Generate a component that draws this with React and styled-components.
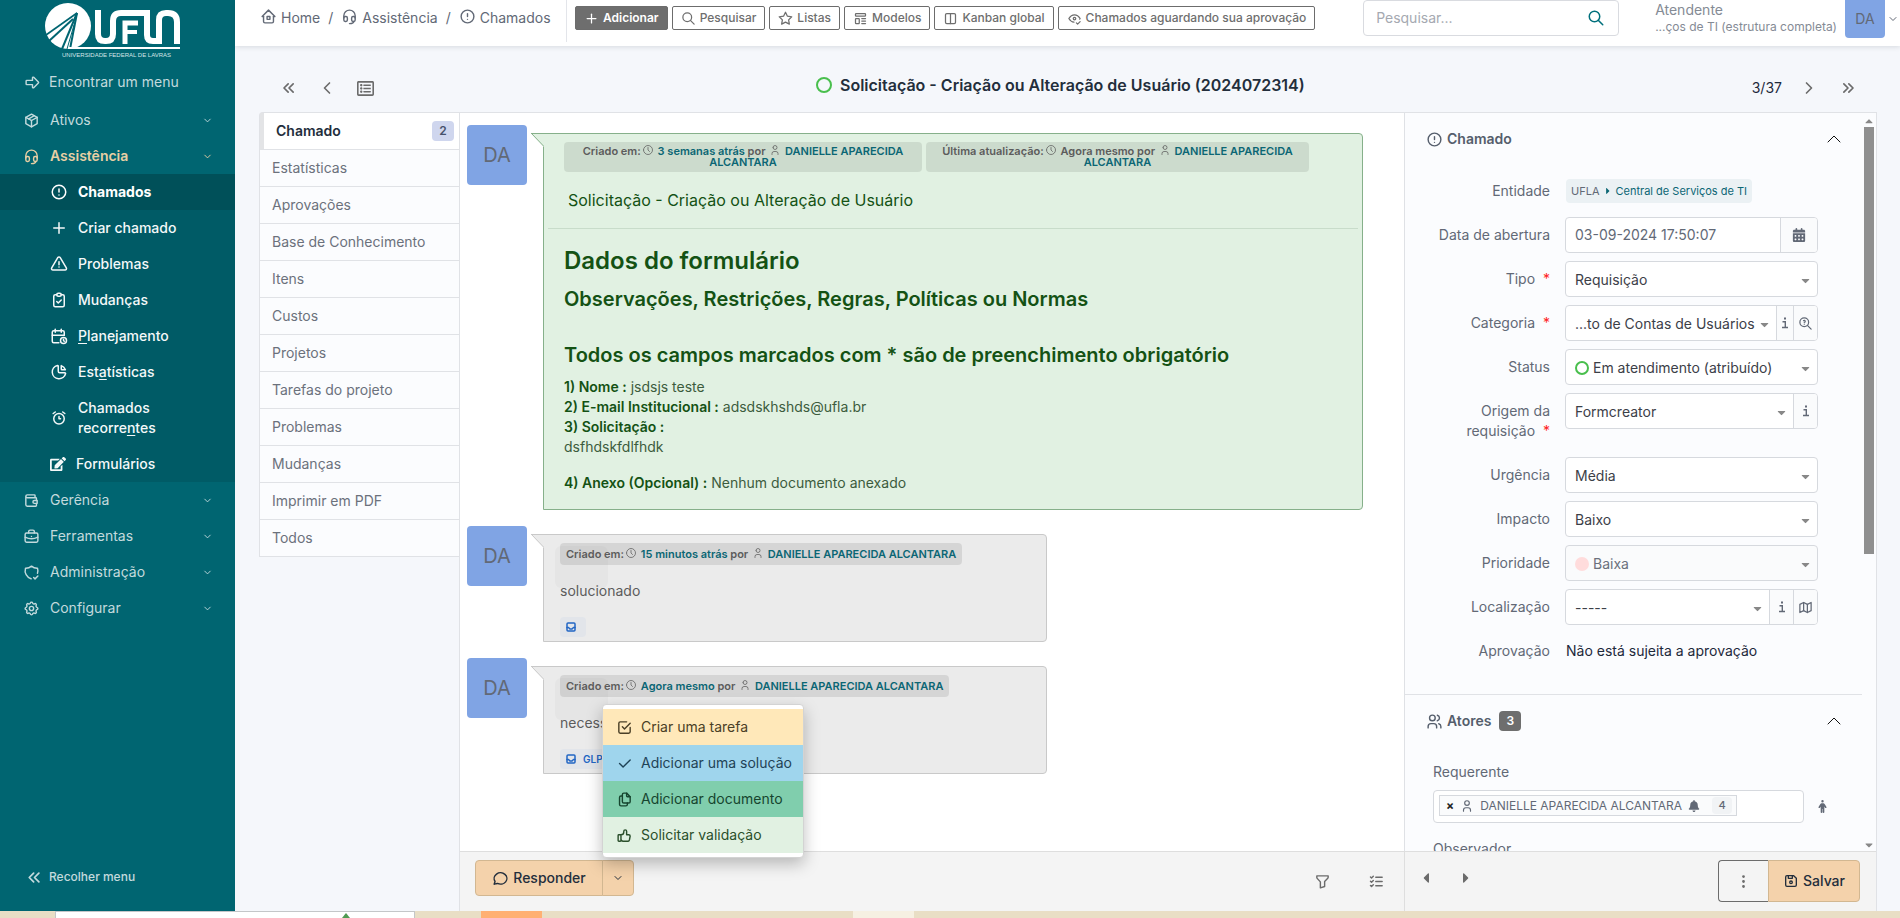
import React from "react";
import styled, { createGlobalStyle, css } from "styled-components";
import {
  TbHome2, TbHeadset, TbAlertCircle, TbPlus, TbSearch, TbStar, TbTemplate, TbLayoutColumns, TbEyeCheck,
  TbPackage, TbAlertTriangle, TbClipboardCheck, TbCalendarTime, TbChartPie, TbAlarm, TbWallet, TbBriefcase,
  TbShieldCheck, TbSettings, TbArrowBigRight, TbChevronDown, TbChevronUp, TbChevronLeft, TbChevronRight,
  TbChevronsLeft, TbChevronsRight, TbFilter, TbListCheck, TbDotsVertical, TbDeviceFloppy, TbClock, TbUser,
  TbUsers, TbMap, TbZoomQuestion, TbCheckbox, TbCheck, TbFiles, TbThumbUp, TbMessageCircle, TbInbox,
} from "react-icons/tb";
import { FaRegListAlt, FaEdit, FaBell, FaCaretRight, FaCaretLeft, FaCaretDown, FaCaretUp } from "react-icons/fa";
import { FaCalendarDays, FaPerson } from "react-icons/fa6";

const Global = createGlobalStyle`
  * { box-sizing: border-box; }
  body { margin: 0; font: 400 14px/20px Inter, "Liberation Sans", sans-serif; color: #1e293b; background: #f5f7fb; }
  button, input, select { font: inherit; color: inherit; margin: 0; }
  button { cursor: pointer; }
  a { color: inherit; text-decoration: none; }
  h1, h2, h3, p, ul { margin: 0; padding: 0; }
  ul { list-style: none; }
  svg { flex: none; }
`;

const Page = styled.div`
  height: 100vh;
  display: flex;
  flex-direction: column;
  overflow: hidden;
`;
const Shell = styled.div`
  flex: 1;
  min-height: 0;
  display: flex;
`;

/* ---------- sidebar ---------- */
const Sidebar = styled.nav`
  width: 235px;
  flex: none;
  background: #006571;
  color: #c3dadd;
  display: flex;
  flex-direction: column;
`;
const LogoBox = styled.a`
  display: block;
  height: 62px;
  padding: 2px 0 0 45px;
  flex: none;
`;
const FindMenu = styled.button`
  display: flex;
  align-items: center;
  gap: 8px;
  height: 40px;
  padding: 0 0 0 24px;
  border: 0;
  background: none;
  flex: none;
`;
const MenuLink = styled.a`
  display: flex;
  align-items: center;
  height: 36px;
  padding: 0 22px 0 23px;
  gap: 10px;
  ${(p) => p.$current && css`color: #e8cfa4; font-weight: 600;`}
  span { flex: 1; }
`;
const SubMenu = styled.ul`
  background: #005b66;
  color: #f4f8f9;
`;
const SubLink = styled.a`
  display: flex;
  align-items: center;
  gap: 10px;
  padding: 8px 48px 8px 50px;
  font-weight: ${(p) => (p.$active ? 700 : 500)};
  background: ${(p) => (p.$active ? "#005059" : "transparent")};
  color: ${(p) => (p.$active ? "#ffffff" : "inherit")};
  u { text-underline-offset: 2px; }
`;
const Collapse = styled.button`
  display: flex;
  align-items: center;
  gap: 4px;
  margin-top: auto;
  height: 68px;
  padding: 0 0 0 24px;
  border: 0;
  background: none;
  font-size: 12px;
  font-weight: 500;
`;

/* ---------- top bar ---------- */
const Main = styled.div`
  flex: 1;
  min-width: 0;
  display: flex;
  flex-direction: column;
`;
const TopBar = styled.header`
  height: 46px;
  flex: none;
  display: flex;
  align-items: flex-start;
  background: #fff;
  box-shadow: 0 1px 5px rgba(30, 41, 59, 0.14);
  color: #626976;
`;
const Crumbs = styled.nav`
  display: flex;
  align-items: center;
  height: 36px;
  padding-left: 25px;
  gap: 8px;
  width: 331px;
  a { display: flex; align-items: center; gap: 4px; }
  svg { margin-bottom: 4px; }
`;
const Actions = styled.div`
  display: flex;
  align-items: center;
  gap: 4px;
  height: 42px;
  padding: 0 0 6px 8px;
  border-left: 1px solid #e3e5ea;
`;
const ActionButton = styled.button`
  display: flex;
  align-items: center;
  gap: 4px;
  height: 24px;
  padding: 0 8px;
  border: 1px solid #6c6c6c;
  border-radius: 2px;
  background: ${(p) => (p.$solid ? "#6e6e6e" : "#fff")};
  color: ${(p) => (p.$solid ? "#fff" : "#6e6e6e")};
  font-size: 12px;
  font-weight: ${(p) => (p.$solid ? 600 : 500)};
  white-space: nowrap;
`;
const SearchBox = styled.label`
  display: flex;
  align-items: center;
  width: 256px;
  height: 36px;
  margin: 0 36px 0 auto;
  padding: 0 13px 0 12px;
  border: 1px solid #d9dbe0;
  border-radius: 4px;
  color: #00707c;
  input { flex: 1; min-width: 0; border: 0; outline: 0; padding: 0; background: none; }
  input::placeholder { color: #a5a9b1; }
`;
const UserMenu = styled.button`
  display: flex;
  align-items: flex-start;
  gap: 8px;
  border: 0;
  padding: 0 1px 0 0;
  background: none;
  text-align: left;
  color: #858b95;
  svg { margin-top: 13px; margin-left: -6px; color: #626976; }
`;
const UserText = styled.span`
  display: flex;
  flex-direction: column;
  line-height: 20px;
  small { font-size: 12px; line-height: 14px; }
`;
const Avatar = styled.span`
  display: flex;
  align-items: center;
  justify-content: center;
  flex: none;
  width: ${(p) => (p.$small ? 40 : 60)}px;
  height: ${(p) => (p.$small ? 38 : 60)}px;
  border-radius: ${(p) => (p.$small ? "0 0 4px 4px" : "4px")};
  background: #80a4e4;
  color: #626976;
  font-size: ${(p) => (p.$small ? 14 : 20)}px;
`;

/* ---------- title row ---------- */
const TitleRow = styled.div`
  height: 66px;
  flex: none;
  display: flex;
  align-items: center;
  justify-content: space-between;
  padding: 18px 40px 0 42px;
`;
const Pager = styled.div`
  display: flex;
  align-items: center;
  gap: ${(p) => p.$gap}px;
`;
const IconButton = styled.button`
  display: inline-flex;
  align-items: center;
  justify-content: center;
  min-width: 24px;
  height: 24px;
  padding: 0;
  border: 0;
  background: none;
  color: #6b6b6b;
`;
const Title = styled.h1`
  display: flex;
  align-items: center;
  gap: 8px;
  padding: 0 8px 6px 0;
  font-size: 16px;
  line-height: 24px;
  font-weight: 600;
  color: #232e3c;
`;
const Ring = styled.i`
  width: ${(p) => p.$size}px;
  height: ${(p) => p.$size}px;
  border-radius: 50%;
  border: ${(p) => (p.$fill ? "0" : "2px solid #49bf4d")};
  background: ${(p) => p.$fill || "transparent"};
`;

/* ---------- body ---------- */
const Body = styled.div`
  flex: 1;
  min-height: 0;
  display: flex;
  padding: 0 23px 0 24px;
`;
const Tabs = styled.ul`
  width: 200px;
  flex: none;
  align-self: flex-start;
  border: 1px solid #e0e2e6;
  border-right: 0;
  border-radius: 4px 0 0 0;
`;
const Tab = styled.a`
  display: flex;
  align-items: center;
  justify-content: space-between;
  height: 37px;
  padding: 0 5px 0 12px;
  background: #fbfcfe;
  color: #6b717c;
  border-bottom: 1px solid #e0e2e6;
  li:last-child & { height: 36px; border-bottom: 0; }
  ${(p) => p.$active && css`
    background: #fff;
    color: #232e3c;
    font-weight: 600;
    border-left: 4px solid #e3e4e6;
  `}
`;
const TabBadge = styled.span`
  min-width: 22px;
  border-radius: 4px;
  text-align: center;
  font-size: 12px;
  font-weight: 600;
  line-height: 20px;
  background: #cfd6ee;
  color: #47526b;
`;
const Card = styled.section`
  flex: 1;
  min-width: 0;
  display: flex;
  flex-direction: column;
  background: #fff;
  border: 1px solid #e0e2e6;
  border-bottom: 0;
`;
const Columns = styled.div`
  flex: 1;
  min-height: 0;
  display: flex;
`;
const Timeline = styled.div`
  flex: 1;
  min-width: 0;
  padding: 12px 41px 0 7px;
  display: flex;
  flex-direction: column;
  gap: 16px;
`;
const Entry = styled.article`
  display: flex;
  align-items: flex-start;
  gap: 16px;
`;
const Bubble = styled.div`
  position: relative;
  flex: ${(p) => (p.$wide ? "1" : "0 1 504px")};
  min-width: 0;
  margin-top: 8px;
  border: 1px solid ${(p) => (p.$wide ? "#86b08a" : "#c9c9c9")};
  border-radius: 0 4px 4px 0;
  background: ${(p) => (p.$wide ? "#e1f1e2" : "#ebebeb")};
  color: ${(p) => (p.$wide ? "#145214" : "#5c5c5c")};
  padding: ${(p) => (p.$wide ? "8px 4px 16px" : "8px 16px 4px")};
`;
const Tail = styled.svg`
  position: absolute;
  left: -13px;
  top: -1px;
`;
const MetaRow = styled.div`
  display: grid;
  grid-template-columns: 358fr 383fr;
  gap: 4px;
  padding: 0 49px 0 16px;
`;
const Meta = styled.div`
  position: relative;
  width: fit-content;
  padding: ${(p) => (p.$center ? "4px 12px" : "6px 6px 5px")};
  border-radius: 4px;
  background: rgba(0, 0, 0, 0.09);
  color: #5c5c5c;
  font-size: 11px;
  line-height: 11px;
  font-weight: 600;
  ${(p) => p.$center && css`width: auto; text-align: center;`}
  a, b { color: #0b6674; font-weight: 600; }
  svg { width: 12px; height: 12px; margin: -4px 1px -1px; }
  svg path { stroke-width: 1.500; }
`;
const Ghost = styled.i`
  position: absolute;
  left: 11px;
  top: 11px;
  width: 53px;
  height: 42px;
  border-radius: 6px;
  background: rgba(0, 0, 0, 0.025);
`;
const RequestTitle = styled.h2`
  margin-top: 16px;
  padding: 0 20px 16px;
  border-bottom: 1px solid #c8dcca;
  font-size: 16px;
  line-height: 24px;
  font-weight: 400;
`;
const FormData = styled.div`
  padding: 16px 16px 0;
  h2 { font-size: 24px; line-height: 32px; font-weight: 600; }
  h3 { margin: 8px 0 28px; font-size: 20px; line-height: 28px; font-weight: 600; }
  h3 + h3 { margin-bottom: 8px; }
  p { color: #3c5c3d; line-height: 20px; }
  p + p.gap { margin-top: 16px; }
  b { color: #145214; font-weight: 600; }
`;
const NoteText = styled.p`
  margin: 16px 0;
  line-height: 20px;
`;
const SourceBadge = styled.span`
  display: inline-flex;
  align-items: center;
  gap: 6px;
  min-width: 26px;
  height: 20px;
  padding: 0 5px;
  border-radius: 4px;
  background: #e2e5ea;
  color: #2266c4;
  font-size: 10px;
  font-weight: 600;
  vertical-align: top;
  svg path { stroke-width: 3; }
`;

/* ---------- side panel ---------- */
const Panel = styled.aside`
  width: 472px;
  flex: none;
  display: flex;
  background: #fbfcfe;
  border-left: 1px solid #dfe1e5;
`;
const PanelScroll = styled.div`
  flex: 1;
  min-width: 0;
  overflow: hidden;
`;
const Section = styled.section`
  padding-bottom: 17px;
  border-bottom: 1px solid #e0e2e6;
`;
const SectionHead = styled.button`
  display: flex;
  align-items: center;
  gap: 4px;
  width: 100%;
  height: 52px;
  padding: 0 16px 0 21px;
  border: 0;
  background: none;
  color: #555e6c;
  font-weight: 600;
  svg:last-child { margin-left: auto; color: #111; }
  svg:last-child path { stroke-width: 1; }
`;
const FieldList = styled.div`
  padding-top: 8px;
`;
const CountBadge = styled.span`
  min-width: 22px;
  margin-left: 4px;
  border-radius: 4px;
  background: #6e6e6e;
  color: #fff;
  font-size: 12px;
  line-height: 20px;
`;
const Field = styled.div`
  display: grid;
  grid-template-columns: 145px 253px;
  column-gap: 15px;
  align-items: start;
  margin-bottom: 8px;
`;
const FieldLabel = styled.label`
  padding: 8px 0 8px 24px;
  text-align: right;
  line-height: 20px;
  color: #626976;
  em { color: #f22; font-style: normal; margin-left: 4px; }
`;
const Group = styled.div`
  display: flex;
  height: 36px;
  border: 1px solid #d6d9de;
  border-radius: 4px;
  background: ${(p) => (p.$muted ? "#fafbfc" : "#fff")};
  color: ${(p) => (p.$muted ? "#6b717c" : "#3c4048")};
  overflow: hidden;
`;
const DateInput = styled.input`
  flex: 1;
  min-width: 0;
  border: 0;
  padding: 0 9px;
  background: none;
  color: #626976;
`;
const SelectWrap = styled.div`
  position: relative;
  flex: 1;
  min-width: 0;
  display: flex;
  select {
    flex: 1;
    min-width: 0;
    appearance: none;
    border: 0;
    padding: 1px 16px 0 ${(p) => (p.$dot ? 27 : 9)}px;
    background: none;
    opacity: 1;
  }
  > svg { position: absolute; right: 5px; top: 12px; color: #888; pointer-events: none; }
  > i { position: absolute; left: 9px; top: 11px; }
`;
const Addon = styled.button`
  display: flex;
  align-items: center;
  justify-content: center;
  width: ${(p) => p.$w}px;
  padding: 0;
  border: 0;
  border-left: 1px solid #d6d9de;
  background: #fafbfc;
  color: #626976;
`;
const EntityBadge = styled.span`
  display: inline-flex;
  align-items: center;
  gap: 3px;
  width: fit-content;
  height: 24px;
  margin: 6px 0 6px 1px;
  padding: 0 5px;
  border-radius: 4px;
  background: #ebf1f4;
  color: #0b6674;
  font-size: 11px;
  white-space: nowrap;
  span { color: #626976; }
`;
const FieldText = styled.span`
  padding: 8px 1px;
`;
const Actors = styled.div`
  padding: 15px 32px 0 28px;
  color: #626976;
`;
const ActorRow = styled.div`
  display: flex;
  align-items: center;
  gap: 12px;
  margin: 8px 0 16px;
`;
const ActorBox = styled.div`
  width: 371px;
  height: 33px;
  padding: 4px 5px;
  border: 1px solid #d6d9de;
  border-radius: 4px;
  background: #fff;
`;
const ActorTag = styled.span`
  display: inline-flex;
  align-items: center;
  gap: 6px;
  height: 21px;
  padding: 0 4px 0 6px;
  border: 1px solid #d6d9de;
  background: #fafbfc;
  font-size: 12px;
  white-space: nowrap;
  vertical-align: top;
  button { border: 0; padding: 0; background: none; color: #222; font-weight: 700; line-height: 16px; }
  small { min-width: 20px; margin-left: 6px; border-radius: 4px; background: #f1f3f5; font-size: 11px; line-height: 17px; text-align: center; font-weight: 500; }
`;
const ScrollTrack = styled.div`
  width: 14px;
  flex: none;
  display: flex;
  flex-direction: column;
  align-items: center;
  padding-top: 2px;
  color: #888;
  svg { height: 12px; }
  svg:last-child { margin-top: auto; }
`;
const Thumb = styled.i`
  width: 10px;
  height: 58%;
  background: #8f8f8f;
`;

/* ---------- footer ---------- */
const Footer = styled.footer`
  display: flex;
  height: 60px;
  flex: none;
  border-top: 1px solid #dedede;
  background: #f4f4f4;
`;
const FooterMain = styled.div`
  flex: 1;
  display: flex;
  align-items: flex-start;
  gap: 30px;
  padding: 8px 16px 0 15px;
  > ${IconButton} { margin-top: 9px; }
`;
const FooterSide = styled.div`
  width: 472px;
  display: flex;
  align-items: flex-start;
  gap: 16px;
  padding: 8px 16px 0 9px;
  border-left: 1px solid #dedede;
  > ${IconButton} { margin-top: 6px; }
`;
const SplitButton = styled.div`
  position: relative;
  display: flex;
  margin-right: auto;
`;
const ReplyButton = styled.button`
  display: flex;
  align-items: center;
  justify-content: center;
  gap: 4px;
  height: 36px;
  width: ${(p) => (p.$caret ? 32 : 128)}px;
  margin-left: ${(p) => (p.$caret ? "-1px" : "0")};
  padding: 0;
  border: 1px solid #d2b791;
  border-radius: ${(p) => (p.$caret ? "0 4px 4px 0" : "4px 0 0 4px")};
  background: #f4d2ab;
  color: #232e3c;
  font-weight: 500;
`;
const SaveGroup = styled.div`
  display: flex;
  margin-left: auto;
`;
const SaveButton = styled.button`
  display: flex;
  align-items: center;
  justify-content: center;
  gap: 4px;
  height: 42px;
  width: ${(p) => (p.$plain ? 50 : 92)}px;
  padding: 0;
  font-weight: 500;
  border: 1px solid ${(p) => (p.$plain ? "#6c6c6c" : "#d2b791")};
  border-radius: ${(p) => (p.$plain ? "4px 0 0 4px" : "0 4px 4px 0")};
  ${(p) => p.$plain && css`border-right: 0;`}
  background: ${(p) => (p.$plain ? "transparent" : "#f4d2ab")};
  color: ${(p) => (p.$plain ? "#6c6c6c" : "#232e3c")};
`;
const DropMenu = styled.ul`
  position: absolute;
  left: 127px;
  bottom: 38px;
  width: 202px;
  padding: 4px 0;
  border: 1px solid #d3d3d3;
  border-radius: 4px;
  background: #fff;
  box-shadow: 0 6px 16px rgba(0, 0, 0, 0.25);
`;
const DropItem = styled.button`
  display: flex;
  align-items: center;
  gap: 8px;
  width: 100%;
  height: 36px;
  padding: 0 0 0 13px;
  border: 0;
  background: ${(p) => p.$bg};
  color: ${(p) => p.$color};
  white-space: nowrap;
`;

/* ---------- desktop strip under the page ---------- */
const Strip = styled.div`
  height: 7px;
  flex: none;
  display: flex;
  background: #e9dec5;
`;
const StripPart = styled.i`
  width: ${(p) => p.$w}px;
  margin-left: ${(p) => p.$gap}px;
  background: ${(p) => p.$bg};
  ${(p) => p.$window && css`border: 1px solid #c4c6c8; border-bottom: 0; padding: 1px 0 0 286px; line-height: 0;`}
`;

function Logo() {
  return (
    <svg width="136" height="57" viewBox="45 1 136 57" aria-label="UFLA">
      <circle cx="68" cy="25" r="23" fill="#fff" />
      <g stroke="#006571" fill="none">
        <path d="M46 34 L77 12" strokeWidth="1.6" />
        <path d="M49 40 L73 18" strokeWidth="2" />
        <path d="M62 48 L77 12" strokeWidth="2" />
        <path d="M77 12 L70 48" strokeWidth="2" />
        <path d="M67 48 L74 24" strokeWidth="1" />
      </g>
      <path d="M68 47 H180" stroke="#fff" strokeWidth="2" />
      <g stroke="#fff" fill="none" strokeWidth="6">
        <path d="M98 9 V33 Q98 40 105 40 H106 Q113 40 113 33 V20 Q113 12 121 12 H147 V34 Q147 40 153 40 H159 V19" />
        <path d="M125 43 V22 H138" strokeWidth="5" />
        <path d="M125 31 H137" strokeWidth="4" />
        <path d="M159 24 V19 Q159 12 166 12 H168 Q177 12 177 21 V43" />
      </g>
      <text x="62" y="56" fontSize="6" fill="#d5e6e8" fontFamily="Liberation Sans, sans-serif">UNIVERSIDADE FEDERAL DE LAVRAS</text>
    </svg>
  );
}

const InfoGlyph = () => (
  <svg width="8" height="12" viewBox="0 0 8 12" fill="none" stroke="currentColor">
    <path d="M3 1.5 H5" strokeWidth="2" />
    <path d="M1.500 4.700 H4.300 V10.500 M1 10.500 H7" strokeWidth="1.400" />
  </svg>
);

const subItems = [
  [TbAlertCircle, "Chamados"],
  [TbPlus, "Criar chamado"],
  [TbAlertTriangle, "Problemas"],
  [TbClipboardCheck, "Mudanças"],
  [TbCalendarTime, <><u>P</u>lanejamento</>],
  [TbChartPie, <>Est<u>a</u>tísticas</>],
  [TbAlarm, <>Chamados recorre<u>n</u>tes</>],
  [FaEdit, "Formulários"],
];
const lowerItems = [
  [TbWallet, "Gerência"],
  [TbBriefcase, "Ferramentas"],
  [TbShieldCheck, "Administração"],
  [TbSettings, "Configurar"],
];
const actions = [
  [TbPlus, "Adicionar"],
  [TbSearch, "Pesquisar"],
  [TbStar, "Listas"],
  [TbTemplate, "Modelos"],
  [TbLayoutColumns, "Kanban global"],
  [TbEyeCheck, "Chamados aguardando sua aprovação"],
];
const tabs = ["Estatísticas", "Aprovações", "Base de Conhecimento", "Itens", "Custos", "Projetos", "Tarefas do projeto", "Problemas", "Mudanças", "Imprimir em PDF", "Todos"];

function MainLink({ icon: Icon, label, current }) {
  return (
    <MenuLink href="#" $current={current}>
      <Icon size={17} />
      <span>{label}</span>
      <TbChevronDown size={11} />
    </MenuLink>
  );
}

function SelectField({ id, label, value, required, dot, muted, addons }) {
  return (
    <Field>
      <FieldLabel htmlFor={id}>{label} {required && <em>*</em>}</FieldLabel>
      <Group $muted={muted}>
        <SelectWrap $dot={!!dot}>
          {dot}
          <select id={id} disabled={muted} defaultValue={value}><option>{value}</option></select>
          <FaCaretDown size={13} />
        </SelectWrap>
        {addons}
      </Group>
    </Field>
  );
}

function SpeechTail({ fill, stroke }) {
  return (
    <Tail width="13" height="14">
      <path d="M0 0 H13 V14 Z" fill={fill} />
      <path d="M0 .5 H13 M.5 .5 L12.5 13" fill="none" stroke={stroke} />
    </Tail>
  );
}

const Author = () => <><TbUser /> <a href="#">DANIELLE APARECIDA ALCANTARA</a></>;

function Note({ when, text, source }) {
  return (
    <Entry>
      <Avatar>DA</Avatar>
      <Bubble>
        <SpeechTail fill="#ebebeb" stroke="#c9c9c9" />
        <Ghost />
        <Meta>Criado em:<TbClock /> <b>{when}</b> por <Author /></Meta>
        <NoteText>{text}</NoteText>
        <SourceBadge><TbInbox size={12} />{source}</SourceBadge>
      </Bubble>
    </Entry>
  );
}

export default function App() {
  return (
    <Page>
      <Global />
      <Shell>
        <Sidebar>
          <LogoBox href="#"><Logo /></LogoBox>
          <FindMenu><TbArrowBigRight size={17} />Encontrar um menu</FindMenu>
          <MainLink icon={TbPackage} label="Ativos" />
          <MainLink icon={TbHeadset} label="Assistência" current />
          <SubMenu>
            {subItems.map(([Icon, label], i) => (
              <li key={i}><SubLink href="#" $active={i === 0}><Icon size={Icon === FaEdit ? 16 : 18} /><span>{label}</span></SubLink></li>
            ))}
          </SubMenu>
          {lowerItems.map(([Icon, label]) => <MainLink key={label} icon={Icon} label={label} />)}
          <Collapse><TbChevronsLeft size={21} />Recolher menu</Collapse>
        </Sidebar>

        <Main>
          <TopBar>
            <Crumbs>
              <a href="#"><TbHome2 size={17} />Home</a><span>/</span>
              <a href="#"><TbHeadset size={17} />Assistência</a><span>/</span>
              <a href="#"><TbAlertCircle size={17} />Chamados</a>
            </Crumbs>
            <Actions>
              {actions.map(([Icon, label], i) => (
                <ActionButton key={label} $solid={i === 0}><Icon size={15} />{label}</ActionButton>
              ))}
            </Actions>
            <SearchBox>
              <input type="text" placeholder="Pesquisar..." aria-label="Pesquisar" />
              <TbSearch size={18} />
            </SearchBox>
            <UserMenu>
              <UserText>Atendente<small>...ços de TI (estrutura completa)</small></UserText>
              <Avatar $small>DA</Avatar>
              <TbChevronDown size={12} />
            </UserMenu>
          </TopBar>

          <TitleRow>
            <Pager $gap={14}>
              <IconButton aria-label="Primeiro"><TbChevronsLeft size={20} /></IconButton>
              <IconButton aria-label="Anterior"><TbChevronLeft size={20} /></IconButton>
              <IconButton aria-label="Lista"><FaRegListAlt size={17} /></IconButton>
            </Pager>
            <Title><Ring $size={16} />Solicitação - Criação ou Alteração de Usuário (2024072314)</Title>
            <Pager $gap={15}>
              <span>3/37</span>
              <IconButton aria-label="Próximo"><TbChevronRight size={20} /></IconButton>
              <IconButton aria-label="Último"><TbChevronsRight size={20} /></IconButton>
            </Pager>
          </TitleRow>

          <Body>
            <Tabs>
              <li><Tab href="#" $active>Chamado<TabBadge>2</TabBadge></Tab></li>
              {tabs.map((t) => <li key={t}><Tab href="#">{t}</Tab></li>)}
            </Tabs>
            <Card>
              <Columns>
                <Timeline>
                  <Entry>
                    <Avatar>DA</Avatar>
                    <Bubble $wide>
                      <SpeechTail fill="#e1f1e2" stroke="#86b08a" />
                      <MetaRow>
                        <Meta $center>Criado em:<TbClock /> <b>3 semanas atrás</b> por <Author /></Meta>
                        <Meta $center>Última atualização:<TbClock /> Agora mesmo por <Author /></Meta>
                      </MetaRow>
                      <RequestTitle>Solicitação - Criação ou Alteração de Usuário</RequestTitle>
                      <FormData>
                        <h2>Dados do formulário</h2>
                        <h3>Observações, Restrições, Regras, Políticas ou Normas</h3>
                        <h3>Todos os campos marcados com * são de preenchimento obrigatório</h3>
                        <p><b>1) Nome :</b> jsdsjs teste</p>
                        <p><b>2) E-mail Institucional :</b> adsdskhshds@ufla.br</p>
                        <p><b>3) Solicitação :</b></p>
                        <p>dsfhdskfdlfhdk</p>
                        <p className="gap"><b>4) Anexo (Opcional) :</b> Nenhum documento anexado</p>
                      </FormData>
                    </Bubble>
                  </Entry>
                  <Note when="15 minutos atrás" text="solucionado" />
                  <Note when="Agora mesmo" text="necess" source="GLPI" />
                </Timeline>

                <Panel>
                  <PanelScroll>
                    <Section>
                      <SectionHead><TbAlertCircle size={17} />Chamado<TbChevronUp size={24} /></SectionHead>
                      <FieldList>
                        <Field>
                          <FieldLabel as="span">Entidade</FieldLabel>
                          <EntityBadge><span>UFLA</span><FaCaretRight size={10} />Central de Serviços de TI</EntityBadge>
                        </Field>
                        <Field>
                          <FieldLabel htmlFor="opened">Data de abertura</FieldLabel>
                          <Group>
                            <DateInput id="opened" type="text" defaultValue="03-09-2024 17:50:07" />
                            <Addon $w={37} aria-label="Calendário"><FaCalendarDays size={14} /></Addon>
                          </Group>
                        </Field>
                        <SelectField id="type" label="Tipo" required value="Requisição" />
                        <SelectField id="category" label="Categoria" required value="...to de Contas de Usuários" addons={<>
                          <Addon $w={17} aria-label="Informação"><InfoGlyph /></Addon>
                          <Addon $w={24} aria-label="Base de conhecimento"><TbZoomQuestion size={15} /></Addon>
                        </>} />
                        <SelectField id="status" label="Status" value="Em atendimento (atribuído)" dot={<Ring $size={14} />} />
                        <SelectField id="origin" label="Origem da requisição" required value="Formcreator" addons={
                          <Addon $w={24} aria-label="Informação"><InfoGlyph /></Addon>} />
                        <SelectField id="urgency" label="Urgência" value="Média" />
                        <SelectField id="impact" label="Impacto" value="Baixo" />
                        <SelectField id="priority" label="Prioridade" value="Baixa" muted dot={<Ring $size={14} $fill="#ffdcdc" />} />
                        <SelectField id="location" label="Localização" value="-----" addons={<>
                          <Addon $w={24} aria-label="Informação"><InfoGlyph /></Addon>
                          <Addon $w={24} aria-label="Mapa"><TbMap size={15} /></Addon>
                        </>} />
                        <Field>
                          <FieldLabel as="span">Aprovação</FieldLabel>
                          <FieldText>Não está sujeita a aprovação</FieldText>
                        </Field>
                      </FieldList>
                    </Section>
                    <SectionHead><TbUsers size={17} />Atores<CountBadge>3</CountBadge><TbChevronUp size={24} /></SectionHead>
                    <Actors>
                      <div>Requerente</div>
                      <ActorRow>
                        <ActorBox>
                          <ActorTag>
                            <button aria-label="Remover">×</button>
                            <TbUser size={14} />DANIELLE APARECIDA ALCANTARA
                            <FaBell size={12} /><small>4</small>
                          </ActorTag>
                        </ActorBox>
                        <FaPerson size={13} />
                      </ActorRow>
                      <div>Observador</div>
                    </Actors>
                  </PanelScroll>
                  <ScrollTrack><FaCaretUp size={10} /><Thumb /><FaCaretDown size={10} /></ScrollTrack>
                </Panel>
              </Columns>

              <Footer>
                <FooterMain>
                  <SplitButton>
                    <ReplyButton><TbMessageCircle size={17} />Responder</ReplyButton>
                    <ReplyButton $caret aria-label="Mais ações"><TbChevronDown size={12} /></ReplyButton>
                    <DropMenu>
                      <li><DropItem $bg="#ffe8b9" $color="#4a3f26"><TbCheckbox size={17} />Criar uma tarefa</DropItem></li>
                      <li><DropItem $bg="#9fd5ed" $color="#1f4356"><TbCheck size={17} />Adicionar uma solução</DropItem></li>
                      <li><DropItem $bg="#80cead" $color="#16452f"><TbFiles size={17} />Adicionar documento</DropItem></li>
                      <li><DropItem $bg="#e1f1e2" $color="#2a4f2b"><TbThumbUp size={17} />Solicitar validação</DropItem></li>
                    </DropMenu>
                  </SplitButton>
                  <IconButton aria-label="Filtro"><TbFilter size={17} /></IconButton>
                  <IconButton aria-label="Lista de tarefas"><TbListCheck size={17} /></IconButton>
                </FooterMain>
                <FooterSide>
                  <IconButton aria-label="Recuar"><FaCaretLeft size={16} /></IconButton>
                  <IconButton aria-label="Avançar"><FaCaretRight size={16} /></IconButton>
                  <SaveGroup>
                    <SaveButton $plain aria-label="Mais"><TbDotsVertical size={17} /></SaveButton>
                    <SaveButton><TbDeviceFloppy size={16} />Salvar</SaveButton>
                  </SaveGroup>
                </FooterSide>
              </Footer>
            </Card>
          </Body>
        </Main>
      </Shell>
      <Strip>
        <StripPart $w={360} $gap={55} $bg="#fff" $window>
          <svg width="8" height="5"><path d="M4 0 L8 5 H0 Z" fill="#4f9a52" /></svg>
        </StripPart>
        <StripPart $w={61} $gap={66} $bg="#ffb073" />
        <StripPart $w={61} $gap={311} $bg="#f6f0e2" />
      </Strip>
    </Page>
  );
}
